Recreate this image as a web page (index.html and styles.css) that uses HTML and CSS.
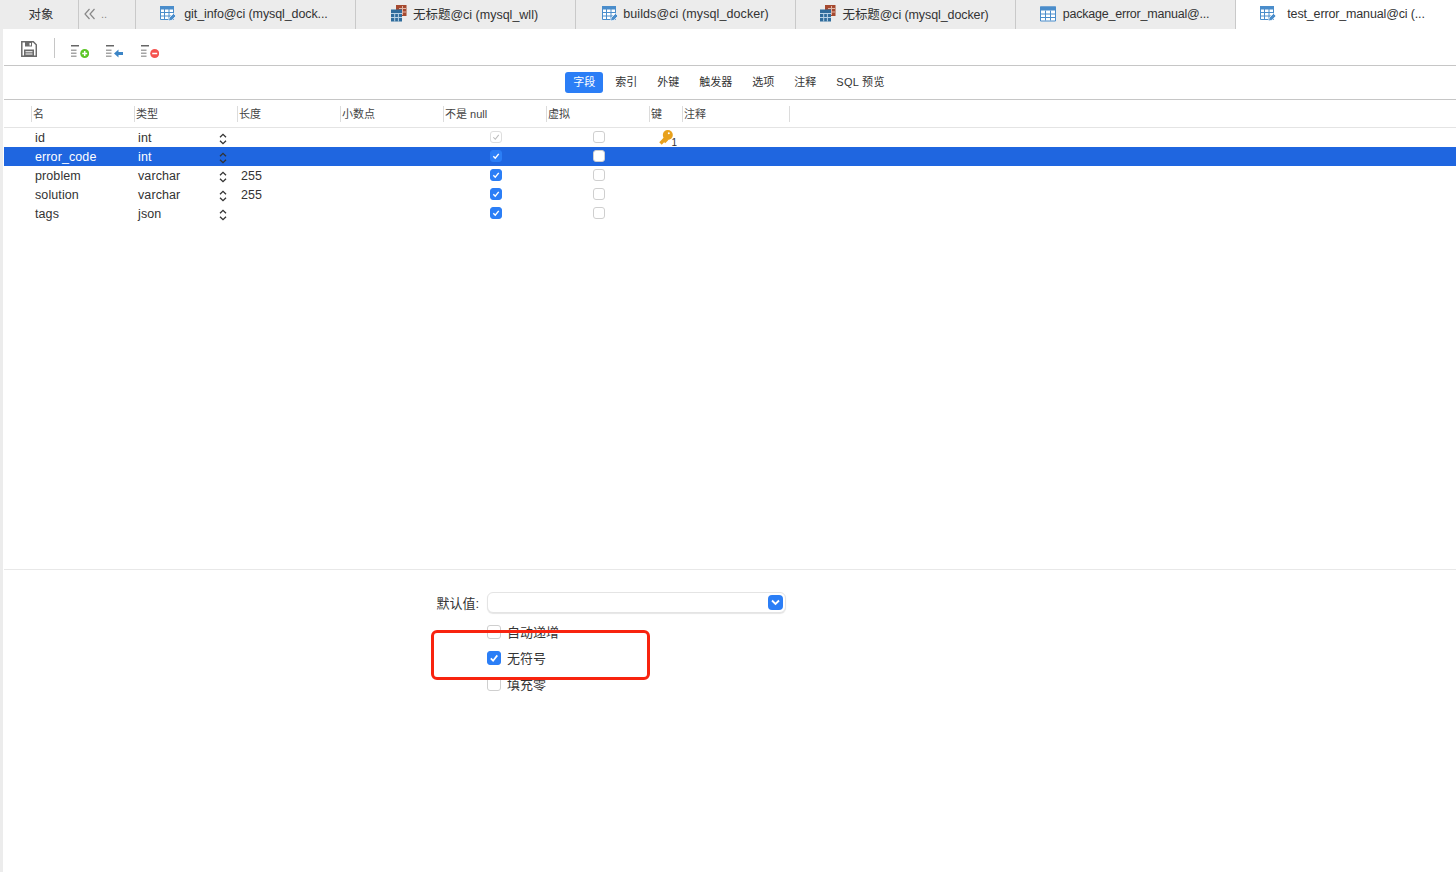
FILE: index.html
```html
<!DOCTYPE html>
<html lang="zh">
<head>
<meta charset="utf-8">
<title>test_error_manual</title>
<link rel="stylesheet" href="styles.css">
</head>
<body>
<svg class="defs" width="0" height="0" aria-hidden="true">
  <defs>
    <symbol id="grid" viewBox="0 0 16 16">
      <path d="M.5 1.500h15v14H.5z" fill="#fff" stroke="#4a8dcb"/>
      <path d="M0 1h16v4H0z" fill="#4a8dcb"/>
      <path d="M.5 8.500h15M.5 12h15M5.500 5v10M10.500 5v10" stroke="#4a8dcb" fill="none"/>
    </symbol>
    <symbol id="grid-edit" viewBox="0 0 16 17">
      <path d="M.5 1.500h13v13H.5z" fill="#fff" stroke="#4a8dcb"/>
      <path d="M0 1h14v3.500H0z" fill="#4a8dcb"/>
      <path d="M.5 7.500h13M.5 11h13M4.500 4v10M9 4v10" stroke="#4a8dcb" fill="none"/>
      <path d="M8.500 16l.7-3.200 4.300-4.300 2.500 2.500-4.300 4.300z" fill="#4a8dcb" stroke="#fff" stroke-width=".7"/>
    </symbol>
    <symbol id="query" viewBox="0 0 16 17">
      <path d="M5 0h10.500v11H5z" fill="#a5492f"/>
      <path d="M8 3.500h7M8 7h7M11.500 1v9" stroke="#e0b5a6" fill="none"/>
      <path d="M0 4.500h11V16.500H0z" fill="#2f6c9c"/>
      <path d="M0 8.500h11M0 12.500h11M3.700 8v8.500M7.400 8v8.500" stroke="#b7d2e6" fill="none"/>
    </symbol>
    <symbol id="bars" viewBox="0 0 18 18">
      <path d="M0 3h8v1.500H0z" fill="#666"/>
      <path d="M0 7.500h5.500V9H0zM0 10.500h5.500V12H0zM0 13.500h5.500V15H0z" fill="#a5a5a5"/>
    </symbol>
    <symbol id="updown" viewBox="0 0 8 12">
      <path d="M1 4.300L4 1.300l3 3M1 7.700l3 3 3-3" fill="none" stroke="#333" stroke-width="1.300"/>
    </symbol>
    <symbol id="tick" viewBox="0 0 12 12">
      <path d="M2.800 6.300l2.300 2.400 4.200-5.300" fill="none" stroke="#fff" stroke-width="1.700"/>
    </symbol>
  </defs>
</svg>

<div class="app">
  <nav class="tabs">
    <div class="tab tab-objects"><span>对象</span></div>
    <div class="tab tab-more">
      <svg class="chevrons" width="12" height="12" viewBox="0 0 12 12"><path d="M5.500 1L1 6l4.500 5M10.500 1L6 6l4.500 5" fill="none" stroke="#888" stroke-width="1.200"/></svg>
      <span class="dots">..</span>
    </div>
    <div class="tab tab-git"><svg class="tab-icon"><use href="#grid-edit"/></svg><span>git_info@ci (mysql_dock...</span></div>
    <div class="tab tab-query"><svg class="tab-icon"><use href="#query"/></svg><span>无标题@ci (mysql_wll)</span></div>
    <div class="tab tab-builds"><svg class="tab-icon"><use href="#grid-edit"/></svg><span>builds@ci (mysql_docker)</span></div>
    <div class="tab tab-query tab-query-narrow"><svg class="tab-icon"><use href="#query"/></svg><span>无标题@ci (mysql_docker)</span></div>
    <div class="tab tab-package"><svg class="tab-icon"><use href="#grid"/></svg><span>package_error_manual@...</span></div>
    <div class="tab tab-active"><svg class="tab-icon"><use href="#grid-edit"/></svg><span>test_error_manual@ci (...</span></div>
  </nav>

  <div class="workspace">
    <div class="toolbar">
      <svg class="tool-save" width="16" height="16" viewBox="0 0 16 16">
        <path d="M.8.800h11.500l3 3v11.500H.8z" fill="#fff" stroke="#6b6b6b" stroke-width="1.500"/>
        <path d="M4 1h7v4.500H4z" fill="#6b6b6b"/>
        <path d="M8.500 2h1.500v2.500H8.500z" fill="#fff"/>
        <path d="M3 8.500h10V15H3z" fill="#6b6b6b"/>
        <path d="M4.500 10.300h7v1h-7zM4.500 12.500h7v1h-7z" fill="#fff"/>
      </svg>
      <span class="tool-sep"></span>
      <svg class="tool" width="18" height="18" viewBox="0 0 18 18">
        <use href="#bars" width="18" height="18"/>
        <circle cx="13.700" cy="11.500" r="4.500" fill="#5cc626"/>
        <path d="M11.200 11.500h5M13.700 9v5" stroke="#fff" stroke-width="1.500"/>
      </svg>
      <svg class="tool" width="18" height="18" viewBox="0 0 18 18">
        <use href="#bars" width="18" height="18"/>
        <path d="M8 11.500l4.500-4v2.500H17v3h-4.500v2.500z" fill="#3c85c6"/>
      </svg>
      <svg class="tool" width="18" height="18" viewBox="0 0 18 18">
        <use href="#bars" width="18" height="18"/>
        <circle cx="13.700" cy="11.500" r="4.500" fill="#f5534f"/>
        <path d="M11.200 11.500h5" stroke="#fff" stroke-width="1.500"/>
      </svg>
    </div>

    <div class="subtabs">
      <span class="subtab subtab-active">字段</span>
      <span class="subtab">索引</span>
      <span class="subtab">外键</span>
      <span class="subtab">触发器</span>
      <span class="subtab">选项</span>
      <span class="subtab">注释</span>
      <span class="subtab subtab-sql">SQL 预览</span>
    </div>

    <div class="col-head">
      <span class="hcell">名</span>
      <span class="hcell">类型</span>
      <span class="hcell">长度</span>
      <span class="hcell">小数点</span>
      <span class="hcell">不是 null</span>
      <span class="hcell">虚拟</span>
      <span class="hcell">键</span>
      <span class="hcell hcell-last">注释</span>
    </div>

    <div class="fields">
      <div class="row">
        <span class="cell">id</span>
        <span class="cell cell-type">int<svg class="updown"><use href="#updown"/></svg></span>
        <span class="cell"></span><span class="cell"></span>
        <span class="cell cell-null"><span class="box box-locked"><svg viewBox="0 0 12 12"><path d="M2.800 6.300l2.300 2.400 4.200-5.300" fill="none" stroke="#bbb" stroke-width="1.300"/></svg></span></span>
        <span class="cell cell-virtual"><span class="box"></span></span>
        <span class="cell cell-key">
          <svg width="18" height="16" viewBox="0 0 18 16">
            <path d="M1.500 13.500L7 7.800" stroke="#e8a11c" stroke-width="3.400" fill="none"/>
            <path d="M5.500 12.500L8.500 9.500" stroke="#e8a11c" stroke-width="2" fill="none"/>
            <circle cx="8.800" cy="5" r="5" fill="#e8a11c"/>
            <circle cx="9.800" cy="3.300" r="1" fill="#fff"/>
            <text x="12.500" y="15.500" class="key-num">1</text>
          </svg>
        </span>
        <span class="cell"></span>
      </div>
      <div class="row row-selected">
        <span class="cell">error_code</span>
        <span class="cell cell-type">int<svg class="updown"><use href="#updown"/></svg></span>
        <span class="cell"></span><span class="cell"></span>
        <span class="cell cell-null"><span class="box box-on"><svg viewBox="0 0 12 12"><use href="#tick"/></svg></span></span>
        <span class="cell cell-virtual"><span class="box"></span></span>
        <span class="cell"></span><span class="cell"></span>
      </div>
      <div class="row">
        <span class="cell">problem</span>
        <span class="cell cell-type">varchar<svg class="updown"><use href="#updown"/></svg></span>
        <span class="cell">255</span><span class="cell"></span>
        <span class="cell cell-null"><span class="box box-on"><svg viewBox="0 0 12 12"><use href="#tick"/></svg></span></span>
        <span class="cell cell-virtual"><span class="box"></span></span>
        <span class="cell"></span><span class="cell"></span>
      </div>
      <div class="row">
        <span class="cell">solution</span>
        <span class="cell cell-type">varchar<svg class="updown"><use href="#updown"/></svg></span>
        <span class="cell">255</span><span class="cell"></span>
        <span class="cell cell-null"><span class="box box-on"><svg viewBox="0 0 12 12"><use href="#tick"/></svg></span></span>
        <span class="cell cell-virtual"><span class="box"></span></span>
        <span class="cell"></span><span class="cell"></span>
      </div>
      <div class="row">
        <span class="cell">tags</span>
        <span class="cell cell-type">json<svg class="updown"><use href="#updown"/></svg></span>
        <span class="cell"></span><span class="cell"></span>
        <span class="cell cell-null"><span class="box box-on"><svg viewBox="0 0 12 12"><use href="#tick"/></svg></span></span>
        <span class="cell cell-virtual"><span class="box"></span></span>
        <span class="cell"></span><span class="cell"></span>
      </div>
    </div>

    <div class="detail">
      <div class="form">
        <div class="form-row">
          <label class="form-label">默认值:</label>
          <div class="select">
            <span class="select-btn"><svg width="9" height="7" viewBox="0 0 9 7"><path d="M1 1.500l3.500 3.500L8 1.500" fill="none" stroke="#fff" stroke-width="1.800"/></svg></span>
          </div>
        </div>
        <div class="check-row"><span class="box box-lg"></span><span>自动递增</span></div>
        <div class="check-row"><span class="box box-lg box-on"><svg viewBox="0 0 12 12"><use href="#tick"/></svg></span><span>无符号</span></div>
        <div class="check-row"><span class="box box-lg"></span><span>填充零</span></div>
      </div>
      <div class="highlight"></div>
    </div>
  </div>
</div>
</body>
</html>
```

FILE: styles.css
```css
* { box-sizing: border-box; }

html, body {
  margin: 0;
  height: 100%;
  overflow: hidden;
  background: #fff;
}

body {
  font-family: "Liberation Sans", "Noto Sans CJK SC", sans-serif;
  font-size: 12px;
  color: #333;
}

.defs { position: absolute; }

.app {
  display: flex;
  flex-direction: column;
  width: 1456px;
  height: 872px;
}

/* Document tabs */
.tabs {
  display: flex;
  height: 29px;
  flex: none;
  background: #ececec;
}

.tab {
  display: flex;
  align-items: center;
  justify-content: center;
  gap: 8px;
  width: 220px;
  padding-bottom: 2px;
  border-right: 1px solid #c9c9c9;
  font-size: 12.5px;
  color: #333;
  white-space: nowrap;
}

.tab-objects { width: 79px; padding-left: 4px; }
.tab-more { width: 57px; justify-content: flex-start; padding-left: 5px; gap: 5px; }
.tab-git { padding-right: 3px; letter-spacing: -.1px; }
.tab-query { gap: 6px; padding-right: 2px; }
.tab-query-narrow { letter-spacing: -.1px; }
.tab-builds { gap: 5px; letter-spacing: .1px; }
.tab-package { gap: 7px; padding-right: 2px; letter-spacing: -.22px; }
.tab-active {
  flex: 1;
  gap: 11px;
  padding-right: 7px;
  letter-spacing: -.15px;
  background: #fff;
  border-right: 0;
}
.dots { color: #888; font-size: 11px; }

.tab-icon { width: 16px; height: 17px; flex: none; }

/* Main pane */
.workspace {
  flex: 1;
  display: flex;
  flex-direction: column;
  min-height: 0;
  border-left: 3px solid #ececec;
  padding-left: 1px;
}

.toolbar {
  display: flex;
  align-items: flex-start;
  height: 37px;
  flex: none;
  padding: 9px 0 0 17px;
  border-bottom: 1px solid #c6c6c6;
}

.tool-save { margin-top: 3px; }
.tool-sep { width: 1px; height: 20px; background: #c6c6c6; margin: 0 16px 0 17px; }
.tool { margin: 4px 17px 0 0; }

.subtabs {
  display: flex;
  align-items: center;
  justify-content: center;
  gap: 4px;
  height: 34px;
  flex: none;
  padding-right: 2px;
  border-bottom: 1px solid #c6c6c6;
  font-size: 11px;
  color: #333;
}

.subtab {
  padding: 0 8px;
  height: 21px;
  line-height: 21px;
  border-radius: 3px;
  white-space: nowrap;
}

.subtab-active { background: #2b7ef6; color: #fff; }
.subtab-sql { letter-spacing: .3px; }

/* Field grid */
.col-head, .row {
  display: grid;
  grid-template-columns: repeat(6, 103px) 33px 108px;
  padding-left: 27px;
}

.col-head {
  height: 28px;
  flex: none;
  align-items: center;
  padding-top: 1px;
  border-bottom: 1px solid #e4e4e4;
  font-size: 11px;
  color: #444;
}

.hcell {
  height: 16px;
  line-height: 17px;
  padding-left: 1px;
  border-left: 1px solid #dcdcdc;
  white-space: nowrap;
}

.hcell-last { border-right: 1px solid #dcdcdc; }

.fields { flex: none; height: 442px; border-bottom: 1px solid #e8e8e8; }

.row {
  height: 19px;
  align-items: center;
  color: #333;
  font-size: 12.5px;
  letter-spacing: .1px;
}

.row-selected { background: #1f66e0; color: #fff; }

.cell {
  display: flex;
  align-items: center;
  height: 19px;
  padding-left: 4px;
  white-space: nowrap;
}

.cell-type { justify-content: space-between; padding-right: 10px; }
.updown { width: 8px; height: 12px; margin-top: 2px; flex: none; }
.cell-null { padding-left: 47px; }
.cell-virtual { padding-left: 47px; }
.cell-key { padding: 0 0 0 10px; }
.cell .box { margin-top: -1px; }
.key-num { font-family: "Liberation Sans", sans-serif; font-size: 10px; fill: #333; }

/* Checkboxes */
.box {
  display: block;
  width: 12px;
  height: 12px;
  flex: none;
  border: 1px solid #cfcfcf;
  border-radius: 3px;
  background: #fff;
}

.box svg { display: block; width: 100%; height: 100%; }
.box-on { background: #2b7ef6; border-color: #2b7ef6; }
.box-locked { border-color: #dedede; }
.box-lg { width: 14px; height: 14px; margin-top: 1px; }

/* Detail pane */
.detail {
  position: relative;
  flex: 1;
  padding: 21px 0 0 427px;
}

.form { width: 360px; font-size: 13px; color: #333; }

.form-row {
  display: flex;
  align-items: center;
  height: 22px;
  margin-bottom: 5px;
}

.form-label {
  width: 56px;
  padding: 0 8px 0 4px;
  text-align: right;
  white-space: nowrap;
}

.select {
  display: flex;
  align-items: center;
  justify-content: flex-end;
  width: 299px;
  height: 21px;
  padding-right: 2px;
  border-radius: 6px;
  background: #fff;
  border: 1px solid #e4e4e4;
  box-shadow: 0 1px 1px rgba(0,0,0,.1);
}

.select-btn {
  display: flex;
  align-items: center;
  justify-content: center;
  width: 15px;
  height: 15px;
  border-radius: 4px;
  background: #2b7ef6;
}

.check-row {
  display: flex;
  align-items: center;
  gap: 6px;
  height: 26px;
  padding-left: 56px;
}

.highlight {
  position: absolute;
  left: 427px;
  top: 60px;
  width: 218.5px;
  height: 50px;
  border: 3px solid #f8230f;
  border-radius: 6px;
}
```
